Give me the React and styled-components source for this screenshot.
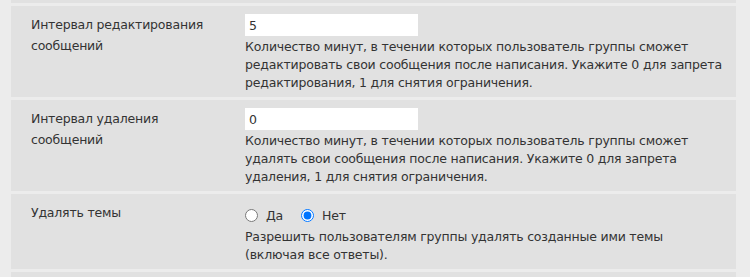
import styled, { createGlobalStyle } from "styled-components";

const GlobalStyle = createGlobalStyle`
  html, body {
    margin: 0;
    padding: 0;
    background: #ececec;
    overflow: hidden;
  }
  body {
    font-family: "DejaVu Sans", Verdana, sans-serif;
    font-size: 12.5px;
    letter-spacing: -0.2px;
    color: #333;
  }
`;

const settings = [
  {
    id: "edit",
    label: "Интервал редактирования сообщений",
    type: "number",
    value: "5",
    hint:
      "Количество минут, в течении которых пользователь группы сможет редактировать свои сообщения после написания. Укажите 0 для запрета редактирования, 1 для снятия ограничения.",
  },
  {
    id: "delete",
    label: "Интервал удаления сообщений",
    type: "number",
    value: "0",
    hint:
      "Количество минут, в течении которых пользователь группы сможет удалять свои сообщения после написания. Укажите 0 для запрета удаления, 1 для снятия ограничения.",
  },
  {
    id: "topics",
    label: "Удалять темы",
    type: "yesno",
    value: "no",
    hint:
      "Разрешить пользователям группы удалять созданные ими темы (включая все ответы).",
  },
];

const App = () => {
  return (
    <>
      <GlobalStyle />
      <List>
        <RowTail />
        {settings.map((s) => (
          <Row key={s.id}>
            <Label>{s.label}</Label>
            <Field>
              {s.type === "number" ? (
                <TextInput type="text" defaultValue={s.value} />
              ) : (
                <RadioGroup>
                  <RadioLabel>
                    <Radio
                      type="radio"
                      name={s.id}
                      defaultChecked={s.value === "yes"}
                    />
                    Да
                  </RadioLabel>
                  <RadioLabel>
                    <Radio
                      type="radio"
                      name={s.id}
                      defaultChecked={s.value === "no"}
                    />
                    Нет
                  </RadioLabel>
                </RadioGroup>
              )}
              <Hint>{s.hint}</Hint>
            </Field>
          </Row>
        ))}
        <Row $stub />
      </List>
    </>
  );
};

export default App;

//
// styles
//

const List = styled.div`
  display: flex;
  flex-direction: column;
  gap: 3px;
  padding: 0 14px 0 11px;
`;

const RowTail = styled.div`
  height: 3px;
  background: #e1e1e1;
`;

const Row = styled.div`
  display: grid;
  grid-template-columns: 214px 1fr;
  background: #e1e1e1;
  padding: 7px 12px 5px 20px;
  min-height: ${(p) => (p.$stub ? "20px" : "auto")};
`;

const Label = styled.div`
  line-height: 21px;
  padding: 1px 30px 0 0;
`;

const Field = styled.div`
  padding-top: 1px;
`;

const TextInput = styled.input`
  display: block;
  box-sizing: border-box;
  width: 173px;
  height: 22px;
  margin: 0 0 2px;
  padding: 0 4px;
  border: none;
  outline: none;
  background: #fff;
  font-family: "DejaVu Sans", Verdana, sans-serif;
  font-size: 12.5px;
  color: #333;
`;

const RadioGroup = styled.div`
  display: flex;
  align-items: center;
  gap: 18px;
  height: 24px;
  margin-top: 1px;
`;

const RadioLabel = styled.label`
  display: flex;
  align-items: center;
  gap: 8px;
  cursor: pointer;
`;

const Radio = styled.input`
  width: 13px;
  height: 13px;
  margin: 0;
`;

const Hint = styled.div`
  line-height: 18px;
  margin-top: 1px;
`;
